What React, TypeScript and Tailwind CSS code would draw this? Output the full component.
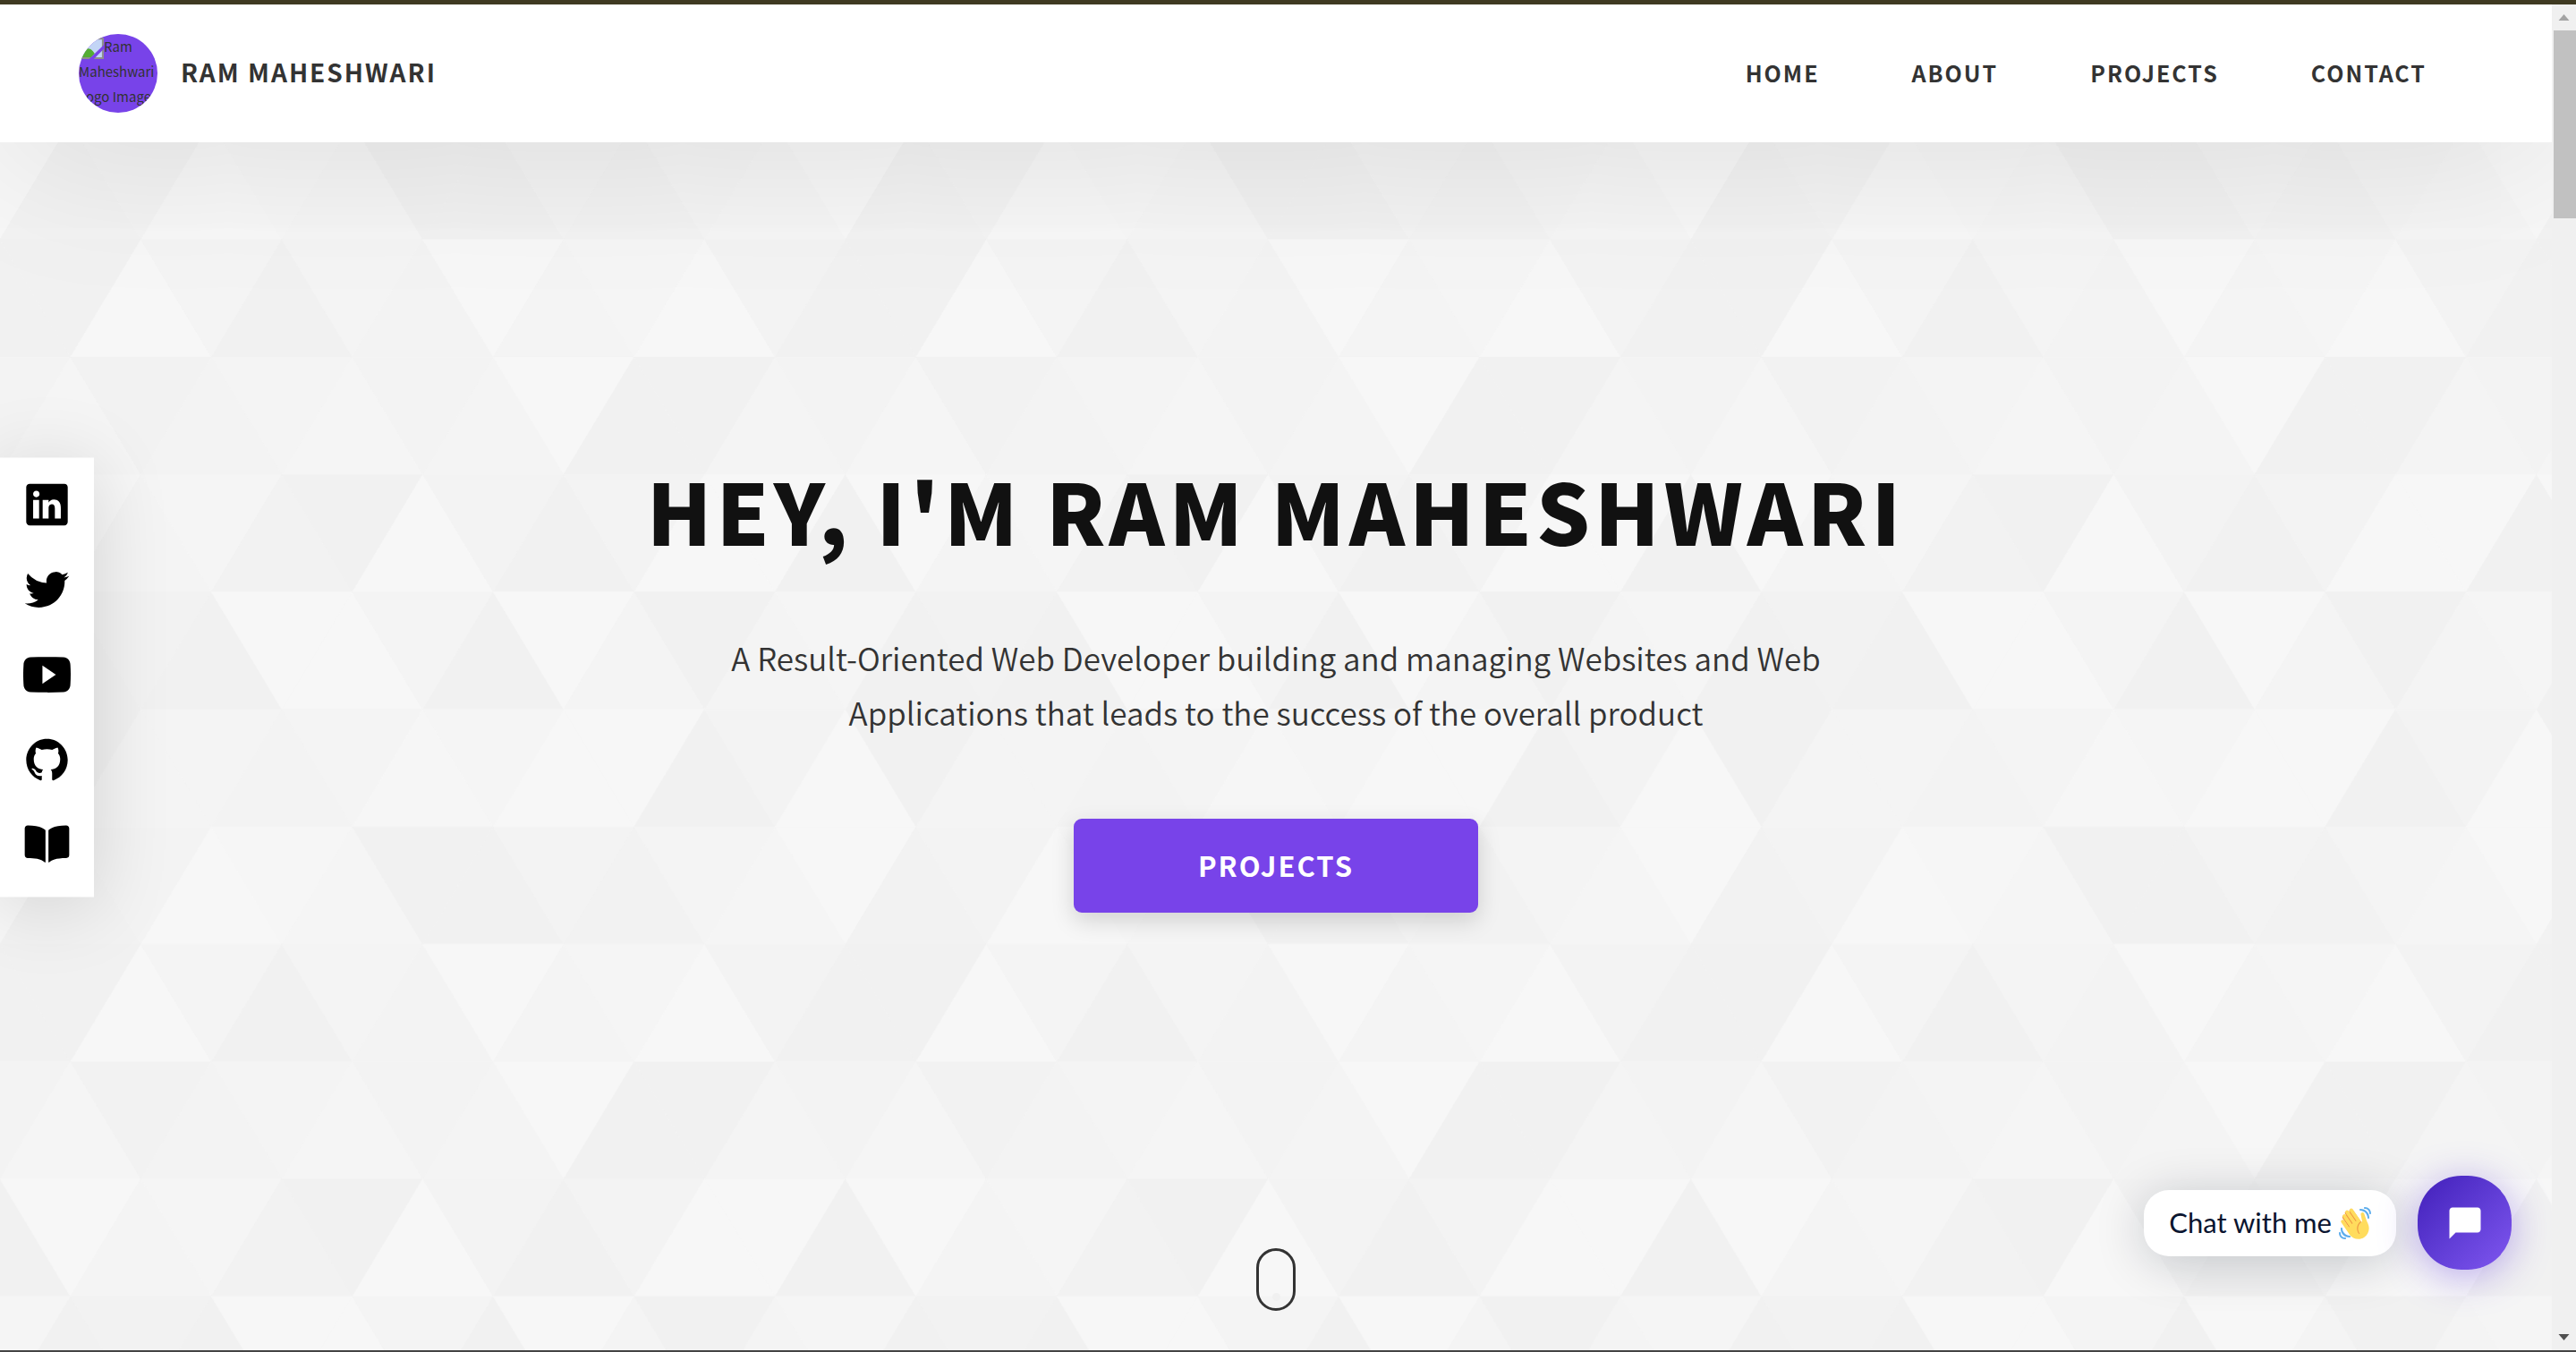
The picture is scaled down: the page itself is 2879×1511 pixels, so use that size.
import { IoBook, IoLogoGithub, IoLogoLinkedin, IoLogoTwitter, IoLogoYoutube } from "react-icons/io5";
import { MdChatBubble } from "react-icons/md";

/* Triangle mosaic: shade of every triangle in one tile, row by row.
   `flip` rows start with a triangle that points down. */
const UNIT = 78.75;
const ROW = 131.25;
const MOSAIC = [
  { flip: false, shades: [6, 2, 4, 5, 6, 3, 5, 8, 1, 1, 5, 4] },
  { flip: true, shades: [8, 5, 6, 2, 1, 8, 3, 1, 4, 8, 8, 1] },
  { flip: false, shades: [1, 2, 1, 8, 8, 5, 1, 8, 5, 1, 5, 6] },
  { flip: true, shades: [1, 5, 5, 3, 5, 7, 6, 8, 8, 1, 3, 8] },
  { flip: false, shades: [2, 3, 8, 7, 6, 1, 1, 4, 2, 5, 6, 8] },
  { flip: true, shades: [1, 8, 5, 1, 5, 3, 8, 5, 6, 8, 3, 1] },
];
const SHADES = ["#f1f1f1", "#f1f1f1", "#f2f2f2", "#f3f3f3", "#f3f3f3", "#f4f4f4", "#f5f5f5", "#f6f6f6", "#f7f7f7"];

function trianglePoints(k: number, row: number, pointsDown: boolean) {
  const x = k * UNIT;
  const y = row * ROW;
  return pointsDown
    ? `${x},${y} ${x + 2 * UNIT},${y} ${x + UNIT},${y + ROW}`
    : `${x},${y + ROW} ${x + 2 * UNIT},${y + ROW} ${x + UNIT},${y}`;
}

function Mosaic() {
  return (
    <svg className="absolute inset-0 h-full w-full" aria-hidden="true">
      <defs>
        <pattern id="mosaic" width={12 * UNIT} height={6 * ROW} patternUnits="userSpaceOnUse" patternTransform="translate(0 -393.5)">
          <rect width={12 * UNIT} height={6 * ROW} fill="#f4f4f4" />
          {MOSAIC.map(({ flip, shades }, row) =>
            [-1, ...shades.keys()].map((k) => {
              const i = (k + 12) % 12;
              const color = SHADES[shades[i]];
              return (
                <polygon
                  key={`${row}-${k}`}
                  points={trianglePoints(k, row, (i % 2 === 1) !== flip)}
                  fill={color}
                  stroke={color}
                  strokeWidth="0.6"
                />
              );
            }),
          )}
        </pattern>
      </defs>
      <rect width="100%" height="100%" fill="url(#mosaic)" />
    </svg>
  );
}

function BrokenImageIcon() {
  return (
    <svg viewBox="0 0 16 16" className="inline h-7 w-7 align-top" aria-hidden="true">
      <path d="M1 3h14.4v12.4H1z" fill="#c3d5f6" stroke="#8f8f8f" strokeWidth="1.2" />
      <path d="M1.6 14.8v-2.4c2-3.8 5.6-4.2 7.6-1.2l1 1.4-2.2 2.2z" fill="#55ad33" />
      <path d="M16 7v2.6L9.6 16H6.6z" fill="#7843e9" />
    </svg>
  );
}

function WavingHand() {
  return (
    <svg viewBox="0 0 36 36" className="h-9 w-9" role="img" aria-label="Waving hand">
      <path fill="#EF9645" d="M4.861 9.147c.94-.657 2.357-.531 3.201.166l-.968-1.407c-.779-1.111-.5-2.313.612-3.093 1.112-.777 4.263 1.312 4.263 1.312-.786-1.122-.639-2.544.483-3.331 1.122-.784 2.68-.513 3.456.611l10.26 14.72L25 31l-11.083-4.042L4.25 12.625c-.793-1.129-.519-2.686.611-3.478z" />
      <path fill="#FFDC5D" d="M2.695 17.336s-1.132-1.65.519-2.781c1.649-1.131 2.78.518 2.78.518l5.251 7.658c.181-.302.379-.6.6-.894L4.557 11.21s-1.131-1.649.519-2.78c1.649-1.131 2.78.518 2.78.518l6.855 9.997c.255-.208.516-.417.785-.622L7.549 6.732s-1.131-1.649.519-2.78c1.649-1.131 2.78.518 2.78.518l7.947 11.589c.292-.179.581-.334.871-.498L12.238 4.729s-1.131-1.649.518-2.78c1.649-1.131 2.78.518 2.78.518l7.854 11.454 1.194 1.742c-4.948 3.394-5.419 9.779-2.592 13.902.565.825 1.39.26 1.39.26-3.393-4.949-2.357-10.51 2.592-13.903L24.515 8.62s-.545-1.924 1.378-2.47c1.924-.545 2.47 1.379 2.47 1.379l1.685 5.004c.668 1.984 1.379 3.961 2.32 5.831 2.657 5.28 1.07 11.842-3.94 15.279-5.465 3.747-12.936 2.354-16.684-3.11L2.695 17.336z" />
      <g fill="#5DADEC">
        <path d="M12 32.042C8 32.042 3.958 28 3.958 24c0-.553-.405-1-.958-1s-1.042.447-1.042 1C1.958 30 6 34.042 12 34.042c.553 0 1-.489 1-1.042s-.447-.958-1-.958z" />
        <path d="M7 34c-3 0-5-2-5-5 0-.553-.447-1-1-1s-1 .447-1 1c0 4 3 7 7 7 .553 0 1-.447 1-1s-.447-1-1-1zM24 2c-.552 0-1 .448-1 1s.448 1 1 1c4 0 8 3.589 8 8 0 .552.448 1 1 1s1-.448 1-1c0-5.514-4-10-10-10z" />
        <path d="M29 .042c-.552 0-1 .406-1 .958s.448 1.042 1 1.042c3 0 4.958 2.225 4.958 4.958 0 .552.489 1 1.042 1s.958-.448.958-1C35.958 3.163 33 .042 29 .042z" />
      </g>
    </svg>
  );
}

const NAV = ["Home", "About", "Projects", "Contact"];

const SOCIALS = [
  { label: "LinkedIn", Icon: IoLogoLinkedin },
  { label: "Twitter", Icon: IoLogoTwitter },
  { label: "YouTube", Icon: IoLogoYoutube },
  { label: "GitHub", Icon: IoLogoGithub },
  { label: "Blog", Icon: IoBook },
];

function Header() {
  return (
    <header className="absolute inset-x-0 top-0 z-20 flex h-[154px] items-center justify-between bg-white pr-[140px] pl-[88px] shadow-[0_18px_175px_rgba(0,0,0,0.1)]">
      <a href="#home" className="flex items-center gap-[26px]">
        <span className="block h-[88px] w-[88px] overflow-hidden rounded-full bg-[#7843e9] text-[15px] leading-7 whitespace-nowrap text-[#333]">
          <BrokenImageIcon />
          Ram
          <br />
          Maheshwari
          <br />
          Logo Image
        </span>
        <span className="pb-1 text-[28px] leading-10 font-bold tracking-[2px] text-[#333] uppercase">Ram Maheshwari</span>
      </a>
      <nav className="flex gap-[103px]">
        {NAV.map((item) => (
          <a key={item} href={`#${item.toLowerCase()}`} className="text-[25px] font-bold tracking-[2px] text-[#333] uppercase">
            {item}
          </a>
        ))}
      </nav>
    </header>
  );
}

function Socials() {
  return (
    <aside className="absolute top-1/2 left-0 z-10 flex w-[105px] -translate-y-1/2 flex-col items-center gap-[42px] bg-white pt-[26px] pb-[32px] shadow-[0_9px_88px_rgba(0,0,0,0.14)]">
      {SOCIALS.map(({ label, Icon }) => (
        <a key={label} href={`#${label.toLowerCase()}`} aria-label={label} className="text-[53px] text-black">
          <Icon />
        </a>
      ))}
    </aside>
  );
}

function Hero() {
  return (
    <section id="home" className="relative flex h-full flex-col items-center justify-center text-center">
      <Mosaic />
      <h1 className="relative text-[94px] leading-[149px] font-black tracking-[5px] text-[#111] uppercase">Hey, I'm Ram Maheshwari</h1>
      <p className="relative mt-[60px] max-w-[1260px] text-[35px] leading-[61px] font-[350] text-[#333]">
        A Result-Oriented Web Developer building and managing Websites and Web Applications that leads to the success of the
        overall product
      </p>
      <a
        href="#projects"
        className="relative mt-[89px] flex h-[105px] w-[452px] items-center justify-center rounded-[9px] bg-[#7843e9] text-[31px] font-bold tracking-[2px] text-white uppercase shadow-[0_9px_26px_rgba(0,0,0,0.15)]"
      >
        Projects
      </a>
      <div className="absolute bottom-[44px] flex h-[70px] w-[44px] items-end justify-center rounded-full border-3 border-[#333] pb-2">
        <span className="h-[9px] w-[9px] rounded-full bg-[#f0f0f0]" />
      </div>
    </section>
  );
}

function ChatWidget() {
  return (
    <div className="absolute right-[45px] bottom-[90px] z-10 flex items-center gap-6">
      <div className="flex h-[74px] items-center gap-2 rounded-[28px] bg-white px-7 font-[Lato,sans-serif] text-[31px] text-[#0a1530] shadow-[0_7px_56px_rgba(6,20,40,0.2)]">
        Chat with me
        <WavingHand />
      </div>
      <button
        type="button"
        aria-label="Open chat"
        className="flex h-[105px] w-[105px] items-center justify-center rounded-[49px] bg-linear-135 from-[#421dba] to-[#8056f0] text-[42px] text-white shadow-[0_7px_44px_rgba(90,50,220,0.4)]"
      >
        <MdChatBubble />
      </button>
    </div>
  );
}

function Scrollbar() {
  return (
    <div className="flex w-[27px] shrink-0 flex-col items-center bg-[#f0f0f0]" aria-hidden="true">
      <div className="flex h-[29px] items-center">
        <svg viewBox="0 0 12 7" className="h-[7px] w-[13px] fill-[#a3a3a3]">
          <path d="M6 0l6 7H0z" />
        </svg>
      </div>
      <div className="ml-[2px] h-[210px] w-[25px] bg-[#c1c1c1]" />
      <div className="flex-1" />
      <svg viewBox="0 0 12 7" className="mb-[11px] h-[7px] w-[13px] fill-[#505050]">
        <path d="M0 0h12L6 7z" />
      </svg>
    </div>
  );
}

export default function App() {
  return (
    <div className="flex h-screen flex-col overflow-hidden bg-white font-['Noto_Sans_CJK_JP',sans-serif]">
      <div className="h-[5px] shrink-0 bg-[#3f3a22]" />
      <div className="flex min-h-0 flex-1">
        <main className="relative min-w-0 flex-1 overflow-hidden">
          <Header />
          <Hero />
          <Socials />
          <ChatWidget />
        </main>
        <Scrollbar />
      </div>
      <div className="h-[2px] shrink-0 bg-[#444]" />
    </div>
  );
}
